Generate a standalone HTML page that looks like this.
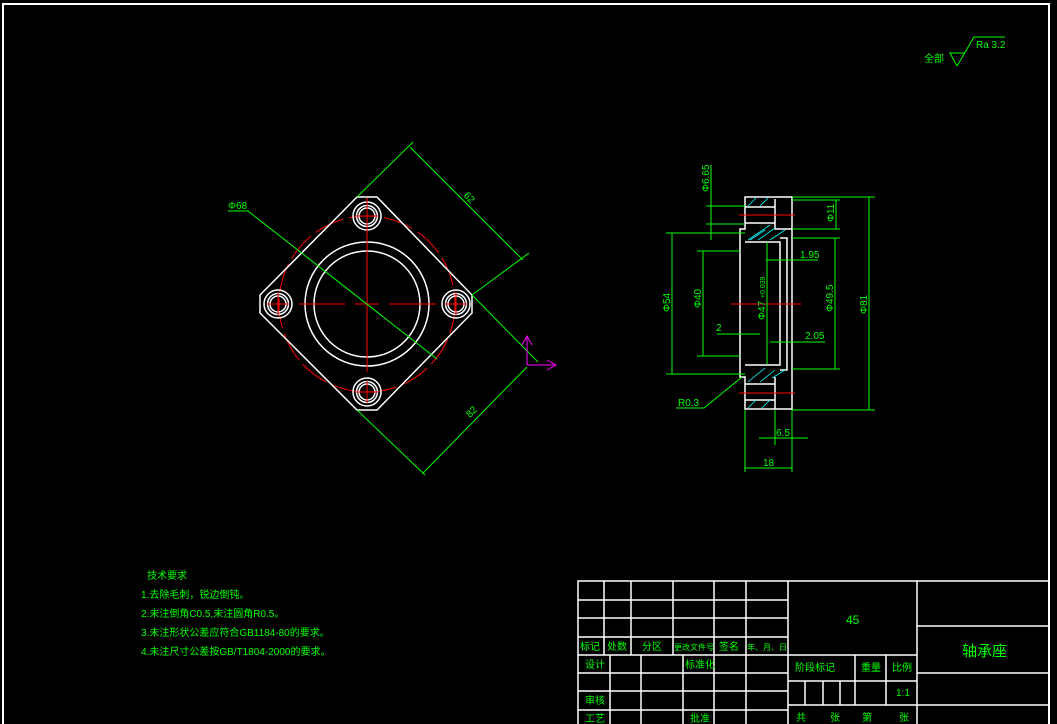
<!DOCTYPE html>
<html><head><meta charset="utf-8"><style>
html,body{margin:0;padding:0;background:#000;overflow:hidden}
svg{display:block}
text{font-family:"Liberation Sans","Noto Sans CJK SC",sans-serif;fill:#0f0}
</style></head><body>
<svg width="1057" height="724" viewBox="0 0 1057 724" xmlns="http://www.w3.org/2000/svg" font-size="10">
<rect width="1057" height="724" fill="#000"/>
<!-- border -->
<path d="M3,730 V4 H1049 V730" fill="none" stroke="#fff" stroke-width="2"/>

<!-- roughness -->
<text x="924" y="62" style="font-size:10px">全部</text>
<path d="M957,66 L950,53 H965 M957,66 L974,37 H1005" fill="none" stroke="#0f0" stroke-width="1"/>
<text x="976" y="48" style="font-size:10px">Ra 3.2</text>

<!-- FRONT VIEW -->
<g fill="none" stroke-width="1">
 <circle cx="367" cy="304" r="88" stroke="#f00" stroke-dasharray="30,6"/>
 <path d="M357,197 H377 L472,295 V313 L377,410 H357 L260,313 V295 Z" stroke="#fff" stroke-width="1.5"/>
 <circle cx="367" cy="304" r="62" stroke="#fff" stroke-width="1.5"/>
 <circle cx="367" cy="304" r="53" stroke="#fff" stroke-width="1.5"/>
 <g stroke="#fff" stroke-width="1.5">
  <circle cx="367" cy="216" r="14"/><circle cx="367" cy="216" r="10.5"/><circle cx="367" cy="216" r="8"/>
  <circle cx="367" cy="392" r="14"/><circle cx="367" cy="392" r="10.5"/><circle cx="367" cy="392" r="8"/>
  <circle cx="278" cy="304" r="14"/><circle cx="278" cy="304" r="10.5"/><circle cx="278" cy="304" r="8"/>
  <circle cx="456" cy="304" r="14"/><circle cx="456" cy="304" r="10.5"/><circle cx="456" cy="304" r="8"/>
 </g>
 <g stroke="#f00">
  <path d="M367,198 V372 M299,304 H345 M355,304 H379 M389,304 H436"/>
  <path d="M356,216 H378 M367,205 V227 M356,392 H378 M367,381 V403 M267,304 H289 M278,293 V315 M445,304 H467 M456,293 V315"/>
 </g>
 <g stroke="#0f0">
  <path d="M357,197 L413,142 M410,147 L523,260 M472,295 L529,253"/>
  <path d="M357,410 L425,475 M423,473 L527,367 M472,295 L538,362"/>
  <path d="M228,211 H248 L437,359"/>
 </g>
 <g stroke="#f0f">
  <path d="M527,365 V336 M522,345 L527,336 L532,345 M527,365 H556 M547,360 L556,365 L547,370"/>
 </g>
</g>
<text x="228" y="209" style="font-size:10px">Φ68</text>
<text x="0" y="0" style="font-size:10px" transform="translate(463,196) rotate(45)">62</text>
<text x="0" y="0" style="font-size:10px" transform="translate(470,418) rotate(-45)">82</text>

<!-- SIDE VIEW -->
<g fill="none" stroke-width="1.5" stroke="#fff">
 <path d="M745,197 H792 V409 H745 V377 H740 V229 H745 Z"/>
 <path d="M745,242 H780 V365 H745"/>
 <path d="M780,238 H787 V370 H780"/>
 <path d="M745,207 H775 V223 H745 M775,199 V229 H792"/>
 <path d="M745,384 H775 V400 H745 M775,377 V409"/>
</g>
<g stroke="#0ff" stroke-width="0.8">
 <path d="M748,206 L756,198 M760,206 L768,198 M748,240 L770,225 M758,240 L775,228 M770,240 L785,230 M750,240 L765,230"/>
 <path d="M748,382 L765,368 M760,382 L775,370 M772,378 L785,370 M748,408 L756,400 M762,408 L770,400"/>
</g>
<g stroke="#f00" stroke-width="1">
 <path d="M731,304 H801 M739,215 H795 M739,393 H795"/>
</g>
<g stroke="#0f0" stroke-width="1" fill="none">
 <path d="M792,197 H875 M792,410 H875 M869,197 V410"/>
 <path d="M792,200 H840 M792,229 H840 M836,200 V229"/>
 <path d="M792,238 H840 M792,369 H840 M835,238 V369"/>
 <path d="M666,233 H745 M666,374 H745 M672,233 V374"/>
 <path d="M697,251 H740 M697,356 H740 M703,251 V356"/>
 <path d="M706,206 H745 M706,224 H745 M711,165 V240"/>
 <path d="M745,410 V472 M792,410 V472 M745,468 H792"/>
 <path d="M775,410 V445 M759,438 H808"/>
 <path d="M676,408 H704 L742,377"/>
 <path d="M766,260 H818 M770,342 H825 M717,334 H760 M767,242 V364"/>
</g>
<g style="font-size:10px">
<text x="0" y="0" transform="translate(709,192) rotate(-90)">Φ6.65</text>
<text x="0" y="0" transform="translate(834,222) rotate(-90)">Φ11</text>
<text x="0" y="0" transform="translate(833,312) rotate(-90)">Φ49.5</text>
<text x="0" y="0" transform="translate(867,314) rotate(-90)">Φ81</text>
<text x="0" y="0" transform="translate(670,312) rotate(-90)">Φ54</text>
<text x="0" y="0" transform="translate(701,308) rotate(-90)">Φ40</text>
<text x="0" y="0" transform="translate(765,320) rotate(-90)">Φ47 <tspan style="font-size:7px">+0.039</tspan></text>
<text x="800" y="258">1.95</text>
<text x="805" y="339">2.05</text>
<text x="716" y="331">2</text>
<text x="678" y="406">R0.3</text>
<text x="776" y="436">6.5</text>
<text x="763" y="466">18</text>
</g>

<!-- tech requirements -->
<g style="font-size:10px">
<text x="147" y="579">技术要求</text>
<text x="141" y="598">1.去除毛刺，锐边倒钝。</text>
<text x="141" y="617">2.未注倒角C0.5,未注圆角R0.5。</text>
<text x="141" y="636">3.未注形状公差应符合GB1184-80的要求。</text>
<text x="141" y="655">4.未注尺寸公差按GB/T1804-2000的要求。</text>
</g>

<!-- TITLE BLOCK -->
<g stroke="#fff" stroke-width="1.5" fill="none">
 <path d="M578,730 V581 H1049"/>
 <path d="M578,600 H788 M578,618 H788 M578,637 H788 M578,655 H917"/>
 <path d="M604,581 V655 M631,581 V655 M673,581 V655 M714,581 V655 M746,581 V655 M788,581 V730"/>
 <path d="M578,673 H788 M578,691 H788 M578,710 H788"/>
 <path d="M610,655 V730 M641,655 V730 M683,655 V730 M714,655 V730 M746,655 V730"/>
 <path d="M917,581 V730 M788,681 H917 M788,705 H917 M855,655 V705 M886,655 V705 M805,681 V705 M823,681 V705 M840,681 V705"/>
 <path d="M917,626 H1048 M917,673 H1048 M917,705 H1048"/>
</g>
<g style="font-size:10px">
<text x="580" y="650">标记</text><text x="607" y="650">处数</text><text x="642" y="650">分区</text>
<text x="674" y="650" style="font-size:8px">更改文件号</text><text x="719" y="650">签名</text><text x="747" y="650" style="font-size:8px">年、月、日</text>
<text x="585" y="668">设计</text><text x="685" y="668">标准化</text>
<text x="585" y="704">审核</text><text x="585" y="722">工艺</text><text x="690" y="722">批准</text>
<text x="795" y="671">阶段标记</text><text x="861" y="671">重量</text><text x="892" y="671">比例</text>
<text x="896" y="696">1:1</text>
<text x="796" y="721">共</text><text x="830" y="721">张</text><text x="862" y="721">第</text><text x="899" y="721">张</text>
</g>
<text x="846" y="624" style="font-size:12px">45</text>
<text x="962" y="656" style="font-size:15px">轴承座</text>
</svg>
</body></html>
